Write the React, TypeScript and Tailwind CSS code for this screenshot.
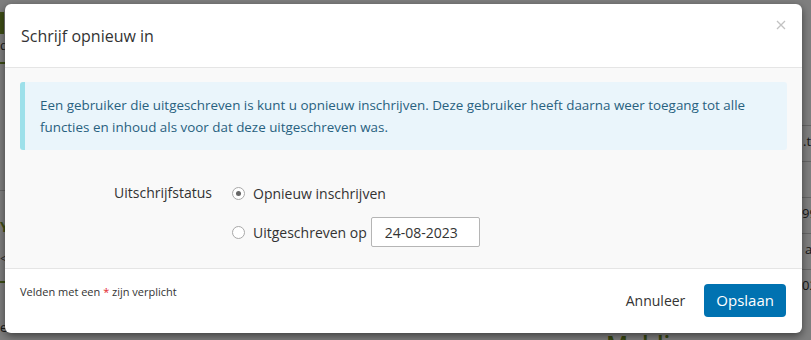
import React, { useState } from "react";

const font = { fontFamily: '"Open Sans", "Liberation Sans", sans-serif' };

function Radio({ checked }: { checked: boolean }) {
  return (
    <span className="flex h-[13px] w-[13px] items-center justify-center rounded-full border border-[#a8a8a8] bg-white">
      {checked && <span className="h-[5px] w-[5px] rounded-full bg-[#666]" />}
    </span>
  );
}

export default function App() {
  const [status, setStatus] = useState<"reenroll" | "unenrolled">("reenroll");

  return (
    <div className="relative h-[340px] w-[811px] overflow-hidden bg-white" style={font}>
      {/* Page behind the dialog */}
      <div className="absolute inset-0">
        <div className="absolute left-0 top-[12px] h-[22px] w-[4px] bg-[#7a9a2c]" />
        <div className="absolute left-0 top-[36px] text-[13px] text-[#333]">d</div>
        <div className="absolute left-0 top-[62px] h-[2px] w-[10px] bg-[#7a9a2c]" />
        <div className="absolute left-0 top-[190px] h-px w-[10px] bg-[#ccc]" />
        <div className="absolute left-0 top-[216px] text-[14px] font-bold text-[#7a9a2c]">Y</div>
        <div className="absolute left-0 top-[250px] text-[12px] text-[#555]">&lt;</div>
        <div className="absolute left-0 top-[281px] h-[2px] w-[10px] bg-[#7a9a2c]" />
        <div className="absolute left-0 top-[318px] text-[13px] text-[#333]">e</div>
        <div className="absolute left-[800px] top-[125px] flex w-[40px] flex-col text-[13px] text-[#333]">
          <div className="h-[36px] border-t border-[#ccc] pl-[3px] pt-[6px]">.t</div>
          <div className="h-[36px] border-t border-[#ccc]" />
          <div className="h-[36px] border-t border-[#ccc] pl-[2px] pt-[6px]">99</div>
          <div className="h-[36px] border-t border-[#ccc] pl-[5px] pt-[6px]">a</div>
          <div className="h-[36px] border-t border-[#ccc] pl-[2px] pt-[6px]">02</div>
        </div>
        <div className="absolute left-[606px] top-[326px] text-[24px] font-semibold text-[#6f8f22]">Meldingen</div>
      </div>
      <div className="absolute inset-0 bg-black/50" />

      {/* Dialog */}
      <div className="absolute left-[5px] top-[4px] flex h-[329px] w-[797px] flex-col overflow-hidden rounded-[6px] bg-white shadow-[0_3px_9px_rgba(0,0,0,0.5)]">
        <div className="flex h-[64px] shrink-0 items-center justify-between border-b border-[#e5e5e5] pl-[16px] pr-[16px]">
          <h1 className="pt-[1px] text-[16px] font-normal text-[#333]">Schrijf opnieuw in</h1>
          <button className="-mt-[22px] text-[#c2c2c2]" aria-label="Sluiten">
            <svg width="10" height="10" viewBox="0 0 10 10" fill="none" stroke="currentColor" strokeWidth="1.3">
              <path d="M1 1L9 9M9 1L1 9" />
            </svg>
          </button>
        </div>

        <div className="flex-1 bg-[#f9f9f9] px-[15px] pt-[14px]">
          <div className="rounded-[3px] border-l-[5px] border-[#9de0ea] bg-[#eaf5fb] py-[12px] pl-[15px] pr-[20px] text-[13.4px] font-medium leading-[22px] text-[#28617f]">
            Een gebruiker die uitgeschreven is kunt u opnieuw inschrijven. Deze gebruiker heeft daarna weer toegang tot alle
            functies en inhoud als voor dat deze uitgeschreven was.
          </div>

          <div className="mt-[31px] flex">
            <div className="w-[192px] text-right text-[14px] leading-[24px] text-[#333]">Uitschrijfstatus</div>
            <div className="ml-[20px] flex flex-col gap-[12px] text-[14px] text-[#333]">
              <label className="flex h-[24px] items-center gap-[8px]" onClick={() => setStatus("reenroll")}>
                <Radio checked={status === "reenroll"} />
                <span>Opnieuw inschrijven</span>
              </label>
              <label className="flex items-center gap-[8px]" onClick={() => setStatus("unenrolled")}>
                <Radio checked={status === "unenrolled"} />
                <span>Uitgeschreven op</span>
                <input
                  className="-ml-[4px] h-[30px] w-[109px] rounded-[2px] border border-[#b5b5b5] bg-white px-[13px] text-[14px] text-[#333] outline-none"
                  defaultValue="24-08-2023"
                />
              </label>
            </div>
          </div>
        </div>

        <div className="flex h-[65px] shrink-0 items-start justify-between border-t border-[#e5e5e5] pl-[15px] pr-[16px]">
          <p className="mt-[15px] text-[11px] text-[#333]">
            Velden met een <span className="text-[#e3262b]">*</span> zijn verplicht
          </p>
          <div className="mt-[15px] flex items-center gap-[19px]">
            <button className="text-[14px] text-[#333]">Annuleer</button>
            <button className="h-[33px] rounded-[4px] bg-[#0072b1] px-[12px] text-[15px] text-white">Opslaan</button>
          </div>
        </div>
      </div>
    </div>
  );
}
